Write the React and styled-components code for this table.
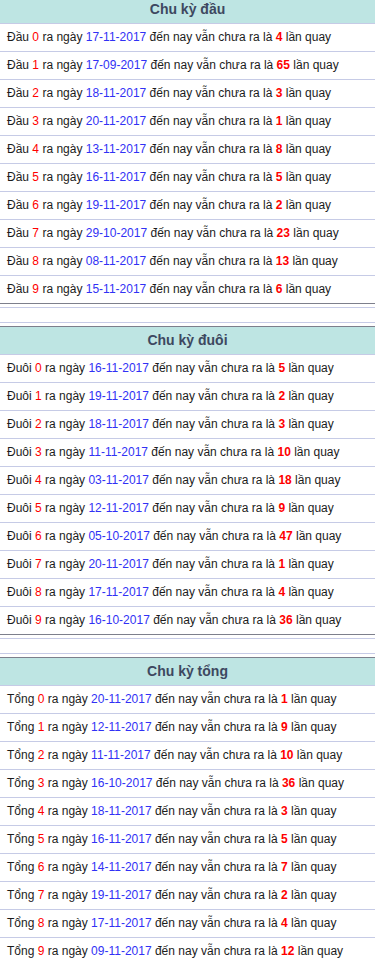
import React from "react";
import styled, { createGlobalStyle } from "styled-components";

const GlobalStyle = createGlobalStyle`
  html, body {
    margin: 0;
    padding: 0;
    background: #ffffff;
  }
  body {
    font-family: "Liberation Sans", Arial, sans-serif;
    font-size: 12px;
    color: #1c1c1c;
  }
`;

const Page = styled.div`
  width: 375px;
  margin-top: -9px;
`;

const Block = styled.section`
  border-top: 1px solid #c6cbe6;
  border-bottom: 1px solid #c6cbe6;
  padding: 3px 0;
  margin-bottom: 14px;
`;

const Table = styled.div`
  border-top: 1px solid #7d7f8c;
  border-bottom: 1px solid #7d7f8c;
`;

const Head = styled.div`
  height: 27px;
  line-height: 27px;
  background: #bee5e3;
  border-bottom: 1px solid #c6cbe6;
  text-align: center;
  font-size: 14px;
  font-weight: bold;
  color: #3d4860;
`;

const Row = styled.div`
  height: 27px;
  line-height: 27px;
  padding-left: 7px;
  white-space: nowrap;
  border-bottom: 1px solid #c6cbe6;

  &:last-child {
    border-bottom: none;
  }
`;

const Num = styled.span`
  color: #ff0000;
  font-weight: ${(p) => (p.$bold ? "bold" : "normal")};
`;

const Date = styled.span`
  color: #3131f5;
`;

const sections = [
  {
    title: "Chu kỳ đầu",
    label: "Đầu",
    rows: [
      ["17-11-2017", 4],
      ["17-09-2017", 65],
      ["18-11-2017", 3],
      ["20-11-2017", 1],
      ["13-11-2017", 8],
      ["16-11-2017", 5],
      ["19-11-2017", 2],
      ["29-10-2017", 23],
      ["08-11-2017", 13],
      ["15-11-2017", 6],
    ],
  },
  {
    title: "Chu kỳ đuôi",
    label: "Đuôi",
    rows: [
      ["16-11-2017", 5],
      ["19-11-2017", 2],
      ["18-11-2017", 3],
      ["11-11-2017", 10],
      ["03-11-2017", 18],
      ["12-11-2017", 9],
      ["05-10-2017", 47],
      ["20-11-2017", 1],
      ["17-11-2017", 4],
      ["16-10-2017", 36],
    ],
  },
  {
    title: "Chu kỳ tổng",
    label: "Tổng",
    rows: [
      ["20-11-2017", 1],
      ["12-11-2017", 9],
      ["11-11-2017", 10],
      ["16-10-2017", 36],
      ["18-11-2017", 3],
      ["16-11-2017", 5],
      ["14-11-2017", 7],
      ["19-11-2017", 2],
      ["17-11-2017", 4],
      ["09-11-2017", 12],
    ],
  },
];

function Cycle({ title, label, rows }) {
  return (
    <Block>
      <Table>
        <Head>{title}</Head>
        {rows.map(([date, count], i) => (
          <Row key={i}>
            {label} <Num>{i}</Num> ra ngày <Date>{date}</Date> đến nay vẫn
            chưa ra là <Num $bold>{count}</Num> lần quay
          </Row>
        ))}
      </Table>
    </Block>
  );
}

export default function App() {
  return (
    <>
      <GlobalStyle />
      <Page>
        {sections.map((s) => (
          <Cycle key={s.title} {...s} />
        ))}
      </Page>
    </>
  );
}
